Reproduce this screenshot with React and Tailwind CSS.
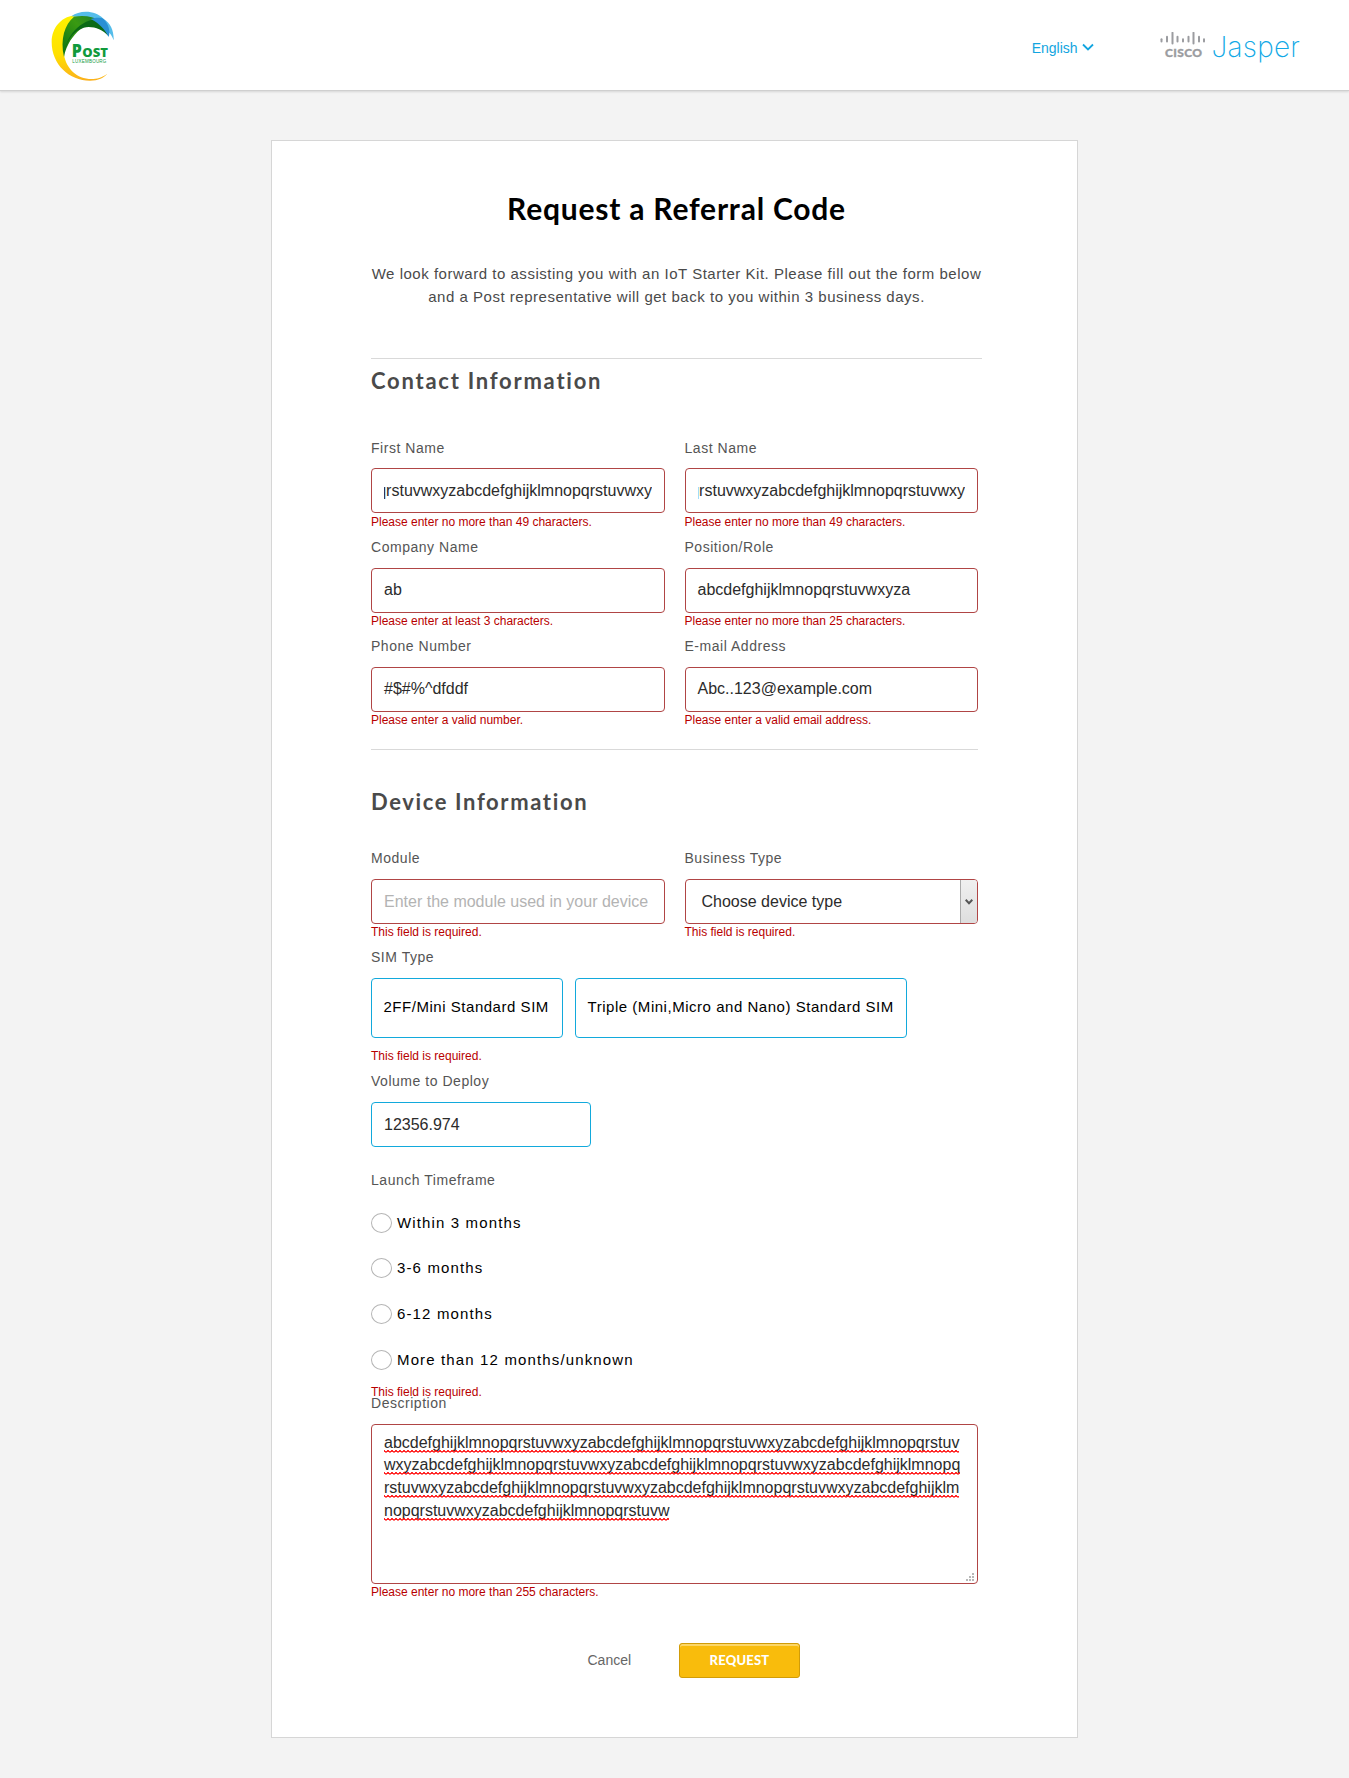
import React from "react";

const SANS = "font-['Liberation_Sans',Arial,sans-serif]";
const HEAD = "font-['Lato',sans-serif]";

function PostLogo() {
  return (
    <svg className="block h-[72px] w-[66px]" viewBox="60 34 198 216" role="img" aria-label="Post Luxembourg">
      <defs>
        <linearGradient id="yl" x1="0" y1="0" x2="0" y2="1">
          <stop offset="0" stopColor="#fff200" />
          <stop offset="0.6" stopColor="#ffe000" />
          <stop offset="1" stopColor="#fbb01c" />
        </linearGradient>
        <linearGradient id="gr" x1="0" y1="1" x2="1" y2="0">
          <stop offset="0" stopColor="#0a7212" />
          <stop offset="0.6" stopColor="#3a9a12" />
          <stop offset="1" stopColor="#1c7d2c" />
        </linearGradient>
      </defs>
      <path d="M152 47 C100 42 65 80 65 127 C65 195 118 243 180 243 C205 243 222 234 232 222 C215 234 200 238 185 238 C140 238 108 205 102 165 C96 110 115 68 152 47Z" fill="url(#yl)" />
      <path d="M124 50 C150 29 198 32 220 57 C243 70 252 95 251 122 C246 108 240 100 234 97 C215 70 180 55 124 50Z" fill="#55bdea" />
      <path d="M102 172 C90 118 104 74 132 51 C165 45 190 52 208 61 C180 66 118 95 102 172Z" fill="url(#gr)" />
      <path d="M102 172 C104 118 140 66 200 57 C214 64 230 88 236 110 C218 90 198 82 176 82 C136 84 104 124 102 172Z" fill="#0b6a16" />
      <path d="M182 58 C200 53 212 54 220 57 C236 72 242 96 236 112 C226 92 210 72 182 58Z" fill="#2a90d4" />
      <text x="125" y="172" fontFamily="Open Sans" fontWeight="800" fill="#119a3c" fontSize="51" textLength="30" lengthAdjust="spacingAndGlyphs">P</text>
      <text x="157" y="172" fontFamily="Open Sans" fontWeight="800" fill="#119a3c" fontSize="37" textLength="77" lengthAdjust="spacingAndGlyphs">OST</text>
      <text x="127" y="191" fontFamily="Liberation Sans" fill="#119a3c" fontSize="13.5" textLength="102">LUXEMBOURG</text>
    </svg>
  );
}

const BARS = [
  [1.5, 6.5, 10], [7, 4, 10], [12.5, 0, 12], [17.5, 4, 10], [23, 6.5, 10],
  [28.5, 4, 10], [33.5, 0, 12], [39, 4, 10], [44, 6.5, 10],
];

function CiscoLogo() {
  return (
    <svg className="block h-7 w-[46px]" viewBox="0 0 46 28" role="img" aria-label="Cisco">
      {BARS.map(([x, a, b]) => (
        <path key={x} d={`M${x} ${a + 0.8}V${b - 0.6}`} stroke="#9b9ca0" strokeWidth="2" strokeLinecap="round" />
      ))}
      <text x="5" y="25" fontFamily="Lato" fontWeight="900" fontSize="12" fill="#9b9ca0" stroke="#9b9ca0" strokeWidth="0.3" textLength="37">CISCO</text>
    </svg>
  );
}

function Label({ children }) {
  return <div className="h-4 text-[14px] leading-4 tracking-[0.53px] whitespace-nowrap text-[#555]">{children}</div>;
}

function Err({ children, className = "" }) {
  return <div className={"h-4 text-[12px] leading-4 whitespace-nowrap text-[#b80000] " + className}>{children}</div>;
}

function Box({ children, className = "" }) {
  return (
    <div className={"flex h-[45px] items-center rounded-[4px] border border-[#b04545] px-3 text-[16px] text-[#2b2b2b] " + className}>
      {children}
    </div>
  );
}

function Field({ label, error, first, children }) {
  return (
    <div>
      <Label>{label}</Label>
      <div className={first ? "h-3" : "h-[13px]"} />
      {children}
      <Err className={first ? "mt-px" : ""}>{error}</Err>
    </div>
  );
}

function Clipped({ className }) {
  return (
    <div className={"flex justify-end overflow-hidden leading-6 " + className}>
      <span>qrstuvwxyzabcdefghijklmnopqrstuvwxy</span>
    </div>
  );
}

function Row({ children, className = "" }) {
  return <div className={"grid grid-cols-[294px_293.5px] gap-[19.5px] " + className}>{children}</div>;
}

function Misspelt({ id, children }) {
  return (
    <div className="relative w-max">
      {children}
      <svg className="absolute top-[18px] left-0 h-[3px] w-full">
        <defs>
          <pattern id={id} width="4" height="3" patternUnits="userSpaceOnUse">
            <path d="M0 0h1v1h-1zM3 0h1v1h-1zM0 1h1v1h-1zM1 1h2v1h-2zM3 1h1v1h-1z" fill="#f00" shapeRendering="crispEdges" opacity="0.85" />
            <path d="M1 2h2v1h-2z" fill="#f00" opacity="0.5" />
          </pattern>
        </defs>
        <rect width="100%" height="3" fill={`url(#${id})`} />
      </svg>
    </div>
  );
}

export default function App() {
  return (
    <div className={"h-[1778px] w-[1349px] overflow-hidden bg-[#f3f3f3] " + SANS}>
      <header className="flex h-[91px] justify-between border-b border-[#cfcfcf] bg-white shadow-[0_1px_2px_rgba(0,0,0,0.12)]">
        <div className="pt-[11px] pl-[50px]">
          <PostLogo />
        </div>
        <div className="flex pr-[49px]">
          <div className="flex pt-10 text-[#12a5e0]">
            <span className="text-[14px] leading-4">English</span>
            <svg className="mt-[3px] ml-[4px] h-[9px] w-3" viewBox="0 0 12 9" fill="none" stroke="currentColor" strokeWidth="1.8">
              <path d="M1 1.5L6 6.5L11 1.5" />
            </svg>
          </div>
          <div className="ml-[66px] pt-8">
            <CiscoLogo />
          </div>
          <div className="ml-[6px] pt-[29px] font-['Inter',sans-serif] text-[28px] leading-9 font-[250] tracking-[0.2px] text-[#12a9e6]">Jasper</div>
        </div>
      </header>

      <main className="mt-[49px] ml-[271px] h-[1598px] w-[807px] border border-[#d6d6d6] bg-white pl-[99px]">
        <h1 className={"mt-[47px] w-[611px] text-center text-[30px] leading-10 font-bold tracking-[0.78px] whitespace-nowrap text-black " + HEAD}>
          Request a Referral Code
        </h1>
        <p className="mt-[34px] w-[611px] text-center text-[15px] leading-[23px] tracking-[0.52px] whitespace-nowrap text-[#4a4a4a]">
          We look forward to assisting you with an IoT Starter Kit. Please fill out the form below
          <br />
          and a Post representative will get back to you within 3 business days.
        </p>
        <div className="mt-[50px] w-[611px] border-t border-[#d9d9d9]" />
        <h2 className={"mt-[8px] text-[22px] leading-7 font-bold tracking-[1.75px] whitespace-nowrap text-[#4a4a4a] " + HEAD}>
          Contact Information
        </h2>

        <Row className="mt-[45px]">
          <Field label="First Name" error="Please enter no more than 49 characters." first>
            <Box><Clipped className="w-[268px]" /></Box>
          </Field>
          <Field label="Last Name" error="Please enter no more than 49 characters." first>
            <Box><Clipped className="w-[267.5px] shrink-0" /></Box>
          </Field>
        </Row>
        <Row className="mt-[9px]">
          <Field label="Company Name" error="Please enter at least 3 characters."><Box className="pb-[2px]">ab</Box></Field>
          <Field label="Position/Role" error="Please enter no more than 25 characters."><Box className="pb-[2px]">abcdefghijklmnopqrstuvwxyza</Box></Field>
        </Row>
        <Row className="mt-[9px]">
          <Field label="Phone Number" error="Please enter a valid number."><Box className="pb-[2px]">#$#%^dfddf</Box></Field>
          <Field label="E-mail Address" error="Please enter a valid email address."><Box className="pb-[2px]">Abc..123@example.com</Box></Field>
        </Row>

        <div className="mt-[21px] w-[607px] border-t border-[#d9d9d9]" />
        <h2 className={"mt-[38px] text-[22px] leading-7 font-bold tracking-[1.62px] whitespace-nowrap text-[#4a4a4a] " + HEAD}>
          Device Information
        </h2>

        <Row className="mt-[34px]">
          <Field label="Module" error="This field is required.">
            <Box><span className="text-[#b3b3b3]">Enter the module used in your device</span></Box>
          </Field>
          <Field label="Business Type" error="This field is required.">
            <Box className="justify-between overflow-hidden !pr-0 !pl-4">
              <span>Choose device type</span>
              <span className="flex h-full w-[17px] items-center justify-center border-l border-[#aaa] bg-linear-to-b from-[#f0f0f0] to-[#dedede]">
                <svg className="h-[6px] w-2" viewBox="0 0 8 6" fill="none" stroke="#555" strokeWidth="2">
                  <path d="M0.7 0.8L4 4.2L7.3 0.8" />
                </svg>
              </span>
            </Box>
          </Field>
        </Row>

        <div className="mt-[9px]"><Label>SIM Type</Label></div>
        <div className="mt-[13px] flex gap-3 text-[15px] tracking-[0.53px] whitespace-nowrap text-black">
          <div className="flex h-[60px] w-[192px] items-center rounded-[4px] border border-[#12a9dc] pb-[2px] pl-[11.5px]">2FF/Mini Standard SIM</div>
          <div className="flex h-[60px] w-[332px] items-center rounded-[4px] border border-[#12a9dc] pb-[2px] pl-[11.5px]">Triple (Mini,Micro and Nano) Standard SIM</div>
        </div>
        <Err className="mt-[10px]">This field is required.</Err>

        <div className="mt-[9px]"><Label>Volume to Deploy</Label></div>
        <Box className="mt-[13px] w-[220px] !border-[#12a9dc]">12356.974</Box>

        <div className="mt-[25px]"><Label>Launch Timeframe</Label></div>
        <div className="mt-[25px] flex flex-col gap-[25.6px] text-[15px] tracking-[1.14px] text-black">
          {["Within 3 months", "3-6 months", "6-12 months", "More than 12 months/unknown"].map((t, i) => (
            <div key={t} className={"flex h-5 items-center gap-[5px] leading-5 " + (i === 1 ? "-mt-[0.6px] mb-[0.6px]" : "")}>
              <span className="h-5 w-[21px] rounded-[50%] border border-[#b5b5b5]" />
              <span>{t}</span>
            </div>
          ))}
        </div>
        <Err className="mt-[14px]">This field is required.</Err>
        <div className="-mt-[5px]"><Label>Description</Label></div>

        <div className="relative mt-[13px] h-[160px] w-[607px] rounded-[4px] border border-[#b04545] px-3 pt-[7px] text-[16px] leading-[22.7px] text-[#2b2b2b]">
          <Misspelt id="s1">abcdefghijklmnopqrstuvwxyzabcdefghijklmnopqrstuvwxyzabcdefghijklmnopqrstuv</Misspelt>
          <Misspelt id="s2">wxyzabcdefghijklmnopqrstuvwxyzabcdefghijklmnopqrstuvwxyzabcdefghijklmnopq</Misspelt>
          <Misspelt id="s3">rstuvwxyzabcdefghijklmnopqrstuvwxyzabcdefghijklmnopqrstuvwxyzabcdefghijklm</Misspelt>
          <Misspelt id="s4">nopqrstuvwxyzabcdefghijklmnopqrstuvw</Misspelt>
          <svg className="absolute right-[3px] bottom-[2px] h-2 w-2" viewBox="0 0 8 8" fill="#b8b8b8" shapeRendering="crispEdges">
            <path d="M6 0h2v2h-2zM3 3h2v2h-2zM6 3h2v2h-2zM0 6h2v2h-2zM3 6h2v2h-2zM6 6h2v2h-2z" />
          </svg>
        </div>
        <Err>Please enter no more than 255 characters.</Err>

        <div className="mt-[43px] flex items-center">
          <span className="ml-[216.5px] w-[91.5px] shrink-0 text-[14px] leading-4 text-[#666]">Cancel</span>
          <span className={"flex h-[35px] w-[121px] shrink-0 items-center justify-center rounded-[3px] border border-[#d19c08] bg-[#f9bc0c] text-[13px] leading-4 font-black tracking-[0.2px] text-white shadow-[inset_0_2px_0_#fcd666] " + HEAD}>
            REQUEST
          </span>
        </div>
      </main>
    </div>
  );
}
